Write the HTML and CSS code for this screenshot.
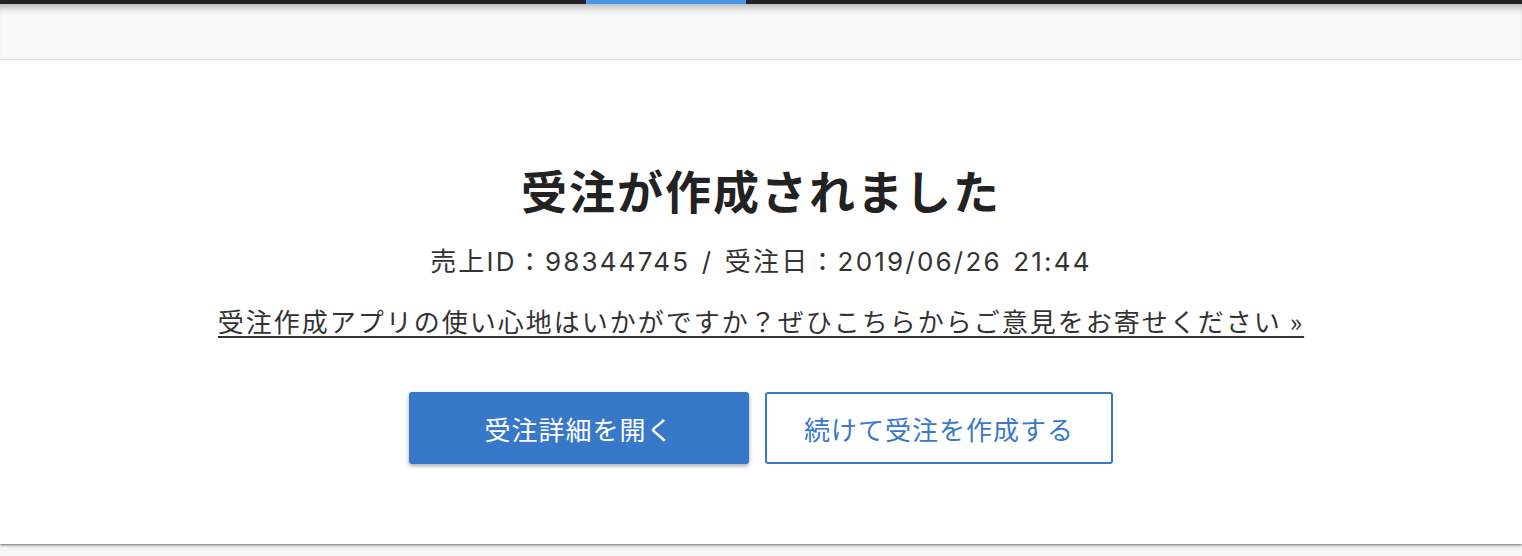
FILE: index.html
```html
<!DOCTYPE html>
<html lang="ja">
<head>
<meta charset="utf-8">
<title>受注が作成されました</title>
<link rel="stylesheet" href="styles.css">
</head>
<body>
<div class="topbar"><div class="topbar-tab"></div></div>
<div class="subheader"></div>
<main class="card">
  <h1 class="title">受注が作成されました</h1>
  <p class="info">売上ID：98344745 / 受注日：2019/06/26 21:44</p>
  <p class="feedback"><a href="#" class="feedback-link">受注作成アプリの使い心地はいかがですか？ぜひこちらからご意見をお寄せください »</a></p>
  <div class="actions">
    <button class="btn btn-primary" type="button">受注詳細を開く</button>
    <button class="btn btn-outline" type="button">続けて受注を作成する</button>
  </div>
</main>
</body>
</html>
```
FILE: styles.css
```css
html, body {
  margin: 0;
  padding: 0;
}
body {
  background: #f6f6f6;
  font-family: "Noto Sans CJK JP", "Noto Sans", sans-serif;
  color: #222;
  height: 556px;
  overflow: hidden;
}
.topbar {
  display: flex;
  height: 4px;
  background: #232323;
}
.topbar-tab {
  margin-left: 586px;
  width: 160px;
  background: #4a97e8;
}
.subheader {
  height: 56px;
  background: #f9f9f9;
  box-shadow: inset 0 9px 9px -6px rgba(0, 0, 0, 0.3), inset 0 -4px 4px -4px rgba(0, 0, 0, 0.08);
}
.card {
  position: relative;
  background: #fff;
  height: 484px;
  box-sizing: border-box;
  padding-top: 101px;
  display: flex;
  flex-direction: column;
  align-items: center;
  box-shadow: 0 1px 2px rgba(0, 0, 0, 0.45), 0 2px 4px rgba(0, 0, 0, 0.15);
}
.title {
  margin: 0;
  font-size: 46px;
  line-height: 56px;
  font-weight: 700;
  letter-spacing: 2px;
  color: #222;
}
.info {
  margin: 27px 0 0;
  font-family: "Inter", "Noto Sans CJK JP", sans-serif;
  font-size: 26px;
  line-height: 36px;
  letter-spacing: 2.2px;
  word-spacing: 2px;
  color: #333;
}
.feedback {
  margin: 23px 0 0;
  font-size: 26px;
  line-height: 36px;
  letter-spacing: 2px;
}
.feedback-link {
  color: #333;
  text-decoration: underline;
  text-decoration-thickness: 1.5px;
  text-underline-offset: 4px;
}
.actions {
  display: flex;
  gap: 16px;
  margin-top: 53px;
}
.btn {
  height: 72px;
  box-sizing: border-box;
  border-radius: 3px;
  font-family: inherit;
  font-size: 26px;
  letter-spacing: 1px;
  padding: 0;
  cursor: pointer;
}
.btn-primary {
  width: 340px;
  background: #3878c9;
  border: none;
  color: #fff;
  box-shadow: 0 2px 4px rgba(0, 0, 0, 0.35);
}
.btn-outline {
  width: 348px;
  background: #fff;
  border: 2px solid #3878c9;
  color: #3878c9;
}
```
